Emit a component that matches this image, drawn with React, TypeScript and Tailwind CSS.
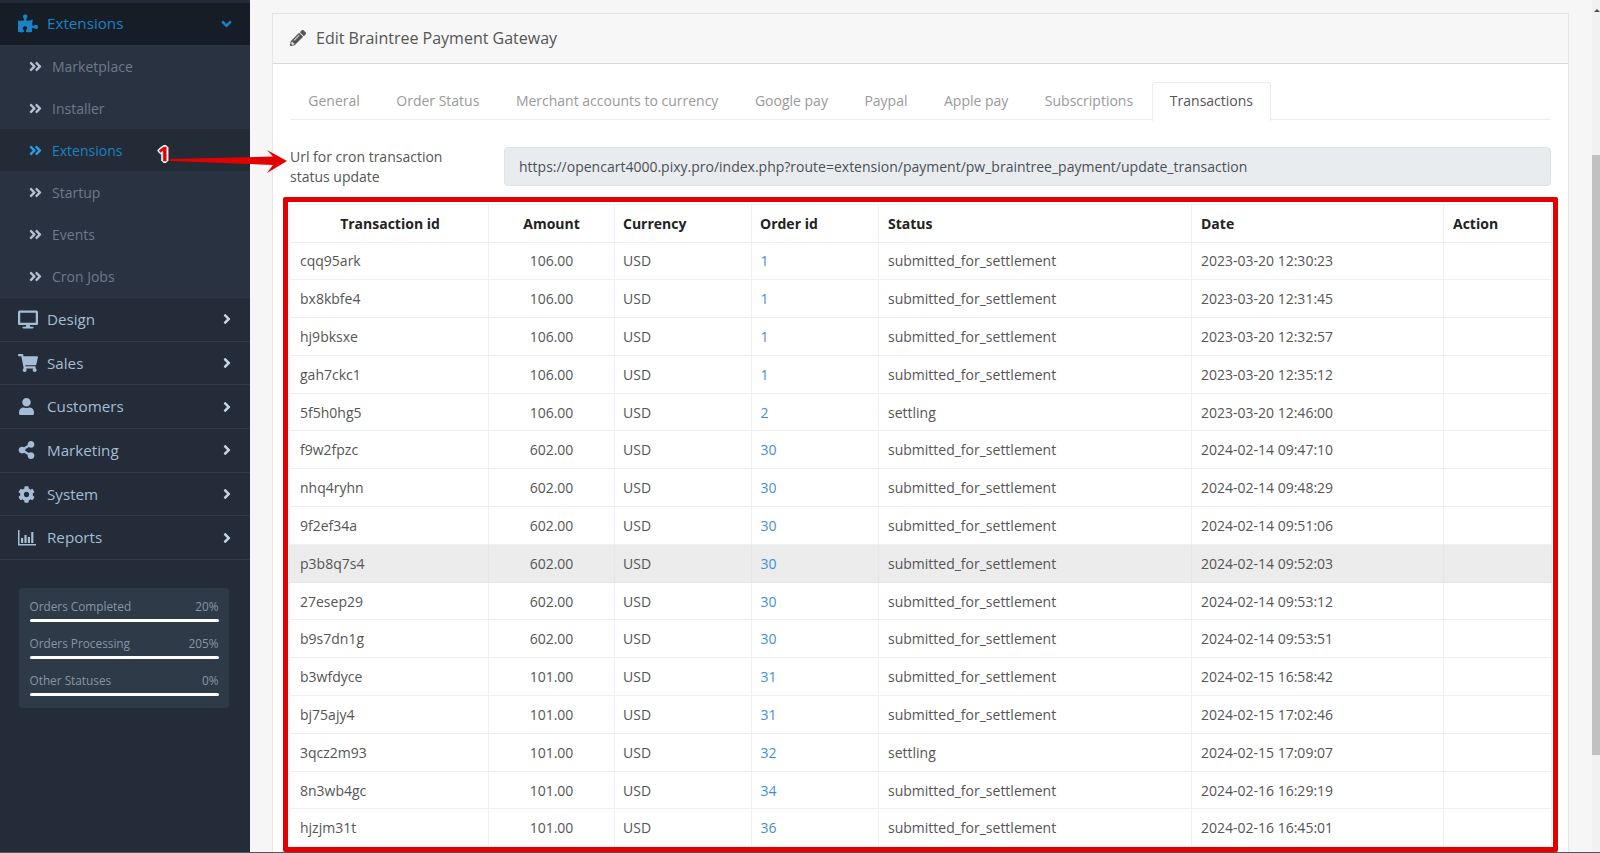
import React from 'react';
import {
  FaAngleDoubleRight,
  FaAngleDown,
  FaAngleRight,
  FaCog,
  FaDesktop,
  FaPencilAlt,
  FaPuzzlePiece,
  FaShareAlt,
  FaShoppingCart,
  FaUser,
} from 'react-icons/fa';

const subItems = ['Marketplace', 'Installer', 'Extensions', 'Startup', 'Events', 'Cron Jobs'];

const BarChart = ({ className }: { className?: string }) => (
  <svg viewBox="0 0 18 16" className={className} fill="currentColor">
    <path d="M0 0h1.5v14H18v1.5H0z" />
    <path d="M3 8h2.2v5H3zM6.4 5h2.2v8H6.4zM9.8 7h2.2v6H9.8zM13.2 2h2.2v11h-2.2z" />
  </svg>
);

const menuItems = [
  { label: 'Design', icon: <FaDesktop className="h-[19px] w-[20px]" /> },
  { label: 'Sales', icon: <FaShoppingCart className="h-[18px] w-[20px]" /> },
  { label: 'Customers', icon: <FaUser className="h-[17px] w-[17px]" /> },
  { label: 'Marketing', icon: <FaShareAlt className="h-[18px] w-[17px]" /> },
  { label: 'System', icon: <FaCog className="h-[17px] w-[17px]" /> },
  { label: 'Reports', icon: <BarChart className="h-[16px] w-[18px]" /> },
];

const stats = [
  { label: 'Orders Completed', value: '20%' },
  { label: 'Orders Processing', value: '205%' },
  { label: 'Other Statuses', value: '0%' },
];

const tabs = ['General', 'Order Status', 'Merchant accounts to currency', 'Google pay', 'Paypal', 'Apple pay', 'Subscriptions'];

const S = 'submitted_for_settlement';
const rows = [
  ['cqq95ark', '106.00', '1', S, '2023-03-20 12:30:23'],
  ['bx8kbfe4', '106.00', '1', S, '2023-03-20 12:31:45'],
  ['hj9bksxe', '106.00', '1', S, '2023-03-20 12:32:57'],
  ['gah7ckc1', '106.00', '1', S, '2023-03-20 12:35:12'],
  ['5f5h0hg5', '106.00', '2', 'settling', '2023-03-20 12:46:00'],
  ['f9w2fpzc', '602.00', '30', S, '2024-02-14 09:47:10'],
  ['nhq4ryhn', '602.00', '30', S, '2024-02-14 09:48:29'],
  ['9f2ef34a', '602.00', '30', S, '2024-02-14 09:51:06'],
  ['p3b8q7s4', '602.00', '30', S, '2024-02-14 09:52:03'],
  ['27esep29', '602.00', '30', S, '2024-02-14 09:53:12'],
  ['b9s7dn1g', '602.00', '30', S, '2024-02-14 09:53:51'],
  ['b3wfdyce', '101.00', '31', S, '2024-02-15 16:58:42'],
  ['bj75ajy4', '101.00', '31', S, '2024-02-15 17:02:46'],
  ['3qcz2m93', '101.00', '32', 'settling', '2024-02-15 17:09:07'],
  ['8n3wb4gc', '101.00', '34', S, '2024-02-16 16:29:19'],
  ['hjzjm31t', '101.00', '36', S, '2024-02-16 16:45:01'],
];

const Sidebar = () => (
  <aside className="w-[250px] shrink-0 bg-[#232c38] text-[15.2px]">
    <div className="mt-[3px] flex h-[42px] items-center bg-[#171d27] pb-[1px] pl-[18px] pr-[17px] text-[#1b82c4]">
      <FaPuzzlePiece className="h-[19px] w-[20px]" />
      <span className="ml-[9px]">Extensions</span>
      <FaAngleDown className="ml-auto h-[16px] w-[13px]" />
    </div>
    <ul className="border-b border-[#2c3644] bg-[#293241] text-[14px]">
      {subItems.map((item, i) => (
        <li
          key={item}
          className={
            i === 2
              ? 'flex h-[42px] items-center bg-[#232b37] pl-[29px] text-[#1b82c4]'
              : 'flex h-[42px] items-center pl-[29px] text-[#6d7a8b]'
          }
        >
          <FaAngleDoubleRight className={i === 2 ? 'h-[15px] w-[13px] text-[#2a9fe6]' : 'h-[15px] w-[13px] text-[#b4c2d3]'} />
          <span className="ml-[10px]">{item}</span>
        </li>
      ))}
    </ul>
    <ul className="text-[#a6bdd6]">
      {menuItems.map((item) => (
        <li key={item.label} className="flex h-[43.7px] items-center border-b border-[#2f3a48] pl-[18px] pr-[17px]">
          <span className="flex w-[29px] items-center">{item.icon}</span>
          <span>{item.label}</span>
          <FaAngleRight className="ml-auto h-[16px] w-[12px] text-[#c6d6e6]" />
        </li>
      ))}
    </ul>
    <div className="ml-[19px] mr-[21px] mt-[27.5px] rounded-[3px] bg-[#2e3a48] px-[10.5px] pb-[12px] pt-[10px]">
      {stats.map((stat) => (
        <div key={stat.label} className="mb-[13.3px] last:mb-0">
          <div className="flex justify-between text-[11.8px] leading-[16px] text-[#8795a4]">
            <span>{stat.label}</span>
            <span>{stat.value}</span>
          </div>
          <div className="mt-[5px] h-[3px] rounded-full bg-white" />
        </div>
      ))}
    </div>
  </aside>
);

const Annotation = () => (
  <>
    <span className="absolute left-[158px] top-[143px] text-[20px] font-bold leading-[22px] text-[#e30000] [-webkit-text-stroke:0.5px_#e30000] [text-shadow:1px_1px_0_#fff,-1px_-1px_0_#fff,1px_-1px_0_#fff,-1px_1px_0_#fff,2px_0_0_#fff,-2px_0_0_#fff,0_2px_0_#fff,0_-2px_0_#fff]">
      1
    </span>
    <svg className="absolute left-[170px] top-[148px]" width="118" height="26" viewBox="0 0 118 26">
      <path d="M0 11 L103 8.5 L97 2 L117 13 L97 25 L103 17 L0 13 Z" fill="#e30000" />
    </svg>
  </>
);

const App = () => {
  return (
    <div className="relative flex h-[853px] w-[1600px] overflow-hidden border-b border-[#555] bg-[#f6f6f6] font-['Open_Sans',sans-serif] text-[14px] text-[#555]">
      <Sidebar />
      <main className="flex-1 pl-[22px] pr-[31px] pt-[13px]">
        <div className="h-[900px] border border-[#e6e6e6] bg-white">
          <div className="flex h-[50px] items-center border-b border-[#dadada] bg-[#f7f7f7] pb-[1px] pl-[17px] text-[16px] text-[#555]">
            <FaPencilAlt className="h-[16px] w-[16px] text-[#555]" />
            <span className="ml-[10px]">Edit Braintree Payment Gateway</span>
          </div>
          <div className="px-[17px] pt-[18px]">
            <div className="flex h-[38px] border-b-[1.5px] border-[#ececec] text-[#9a9a9a]">
              {tabs.map((tab) => (
                <span key={tab} className="flex h-full items-center px-[18.25px]">{tab}</span>
              ))}
              <span className="-mb-[1.5px] ml-[1px] flex h-[38.5px] items-center rounded-t-[3px] border-[1.5px] border-b-0 border-[#ececec] bg-white px-[16.5px] pb-[3.5px] text-[#555]">
                Transactions
              </span>
            </div>
            <div className="mt-[27px] flex">
              <div className="w-[214px] leading-[20px]">
                <div>Url for cron transaction</div>
                <div>status update</div>
              </div>
              <div className="flex h-[39px] flex-1 items-center rounded-[4px] border border-[#dee2e6] bg-[#e9ecef] pl-[14px] text-[#495057]">
                https://opencart4000.pixy.pro/index.php?route=extension/payment/pw_braintree_payment/update_transaction
              </div>
            </div>
            <div className="-mx-[7px] mt-[10px] rounded-[2px] border-[5px] border-[#e30000] bg-white px-[1px] pt-[1.5px]">
              <table className="w-full table-fixed border-collapse">
                <colgroup>
                  <col className="w-[199px]" />
                  <col className="w-[126px]" />
                  <col className="w-[137px]" />
                  <col className="w-[127px]" />
                  <col className="w-[313px]" />
                  <col className="w-[252px]" />
                  <col />
                </colgroup>
                <thead>
                  <tr className="h-[38px] text-[#222] [&>th]:border [&>th]:border-[#edf0f4] [&>th]:font-bold">
                    <th className="pl-[2px] text-center">Transaction id</th>
                    <th className="text-center">Amount</th>
                    <th className="pl-[8px] text-left">Currency</th>
                    <th className="pl-[8px] text-left">Order id</th>
                    <th className="pl-[9px] text-left">Status</th>
                    <th className="pl-[9px] text-left">Date</th>
                    <th className="pl-[9px] text-left">Action</th>
                  </tr>
                </thead>
                <tbody>
                  {rows.map((row, i) => (
                    <tr key={row[0]} className={i === 8 ? 'h-[37.8px] bg-[#ececec] [&>td]:border [&>td]:border-[#e4e6ea]' : 'h-[37.8px] [&>td]:border [&>td]:border-[#edf0f4]'}>
                      <td className="pl-[10px]">{row[0]}</td>
                      <td className="text-center">{row[1]}</td>
                      <td className="pl-[8px]">USD</td>
                      <td className="pl-[8.5px] text-[#3f8fd6]">{row[2]}</td>
                      <td className="pl-[9px]">{row[3]}</td>
                      <td className="pl-[9px]">{row[4]}</td>
                      <td />
                    </tr>
                  ))}
                </tbody>
              </table>
            </div>
          </div>
        </div>
      </main>
      <div className="absolute right-0 top-0 flex h-full w-[8px] flex-col bg-[#f1f1f1]">
        <svg width="8" height="12" viewBox="0 0 8 12" className="absolute left-0 top-0">
          <path d="M2 12 L5 9 L8 12 Z" fill="#505050" />
        </svg>
        <div className="mt-[155px] h-[600px] bg-[#c1c1c1]" />
      </div>
      <Annotation />
    </div>
  );
};

export default App;
